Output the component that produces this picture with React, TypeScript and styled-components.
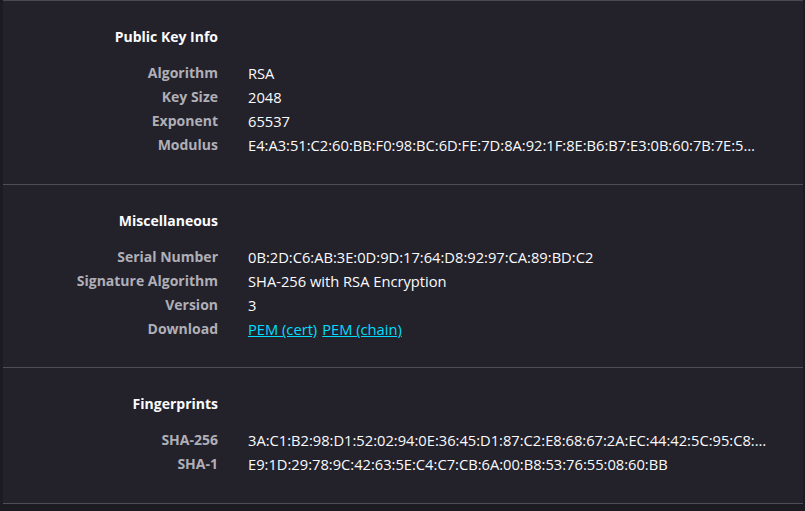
import React from "react";
import styled, { createGlobalStyle } from "styled-components";

const GlobalStyle = createGlobalStyle`
  html, body {
    margin: 0;
    padding: 0;
    background: #1c1b22;
  }
  body {
    font-family: "Open Sans", "Noto Sans", sans-serif;
    color: #fbfbfe;
  }
`;

type Item = { label: string; value?: string; links?: string[] };
type SectionData = { title: string; items: Item[] };

const sections: SectionData[] = [
  {
    title: "Public Key Info",
    items: [
      { label: "Algorithm", value: "RSA" },
      { label: "Key Size", value: "2048" },
      { label: "Exponent", value: "65537" },
      {
        label: "Modulus",
        value: "E4:A3:51:C2:60:BB:F0:98:BC:6D:FE:7D:8A:92:1F:8E:B6:B7:E3:0B:60:7B:7E:5…",
      },
    ],
  },
  {
    title: "Miscellaneous",
    items: [
      { label: "Serial Number", value: "0B:2D:C6:AB:3E:0D:9D:17:64:D8:92:97:CA:89:BD:C2" },
      { label: "Signature Algorithm", value: "SHA-256 with RSA Encryption" },
      { label: "Version", value: "3" },
      { label: "Download", links: ["PEM (cert)", "PEM (chain)"] },
    ],
  },
  {
    title: "Fingerprints",
    items: [
      {
        label: "SHA-256",
        value: "3A:C1:B2:98:D1:52:02:94:0E:36:45:D1:87:C2:E8:68:67:2A:EC:44:42:5C:95:C8:…",
      },
      {
        label: "SHA-1",
        value: "E9:1D:29:78:9C:42:63:5E:C4:C7:CB:6A:00:B8:53:76:55:08:60:BB",
      },
    ],
  },
];

const Page = styled.div`
  padding-left: 3px;
  min-height: 511px;
  box-sizing: border-box;
  background: #1c1b22;
`;

const Panel = styled.div`
  background: #23222b;
  border-top: 1px solid #4a4950;
  margin-right: 2px;
`;

const Section = styled.section`
  display: grid;
  grid-template-columns: 215px 1fr;
  column-gap: 30px;
  padding: 24px 0 27px;
  border-bottom: 1px solid #4f4e56;

  &:nth-of-type(2) {
    padding-bottom: 26px;
  }
`;

const Title = styled.h2`
  grid-column: 1;
  margin: 0 0 12px;
  font-size: 14px;
  font-weight: 700;
  line-height: 24px;
  text-align: right;
  color: #fbfbfe;
`;

const Spacer = styled.div`
  grid-column: 2;
`;

const Label = styled.div`
  grid-column: 1;
  font-size: 14px;
  font-weight: 700;
  line-height: 24px;
  text-align: right;
  color: #b0afb7;
  white-space: nowrap;
`;

const Value = styled.div`
  grid-column: 2;
  font-size: 14.7px;
  line-height: 24px;
  color: #fbfbfe;
  white-space: nowrap;
`;

const Links = styled.div`
  grid-column: 2;
  display: flex;
  gap: 5px;
  font-size: 14.7px;
  line-height: 24px;
`;

const Link = styled.a`
  color: #00ddff;
  text-decoration: underline;
  cursor: pointer;
`;

export default function App() {
  return (
    <>
      <GlobalStyle />
      <Page>
        <Panel>
          {sections.map((s) => (
            <Section key={s.title}>
              <Title>{s.title}</Title>
              <Spacer />
              {s.items.map((it) => (
                <React.Fragment key={it.label}>
                  <Label>{it.label}</Label>
                  {it.links ? (
                    <Links>
                      {it.links.map((l) => (
                        <Link key={l}>{l}</Link>
                      ))}
                    </Links>
                  ) : (
                    <Value>{it.value}</Value>
                  )}
                </React.Fragment>
              ))}
            </Section>
          ))}
        </Panel>
      </Page>
    </>
  );
}
